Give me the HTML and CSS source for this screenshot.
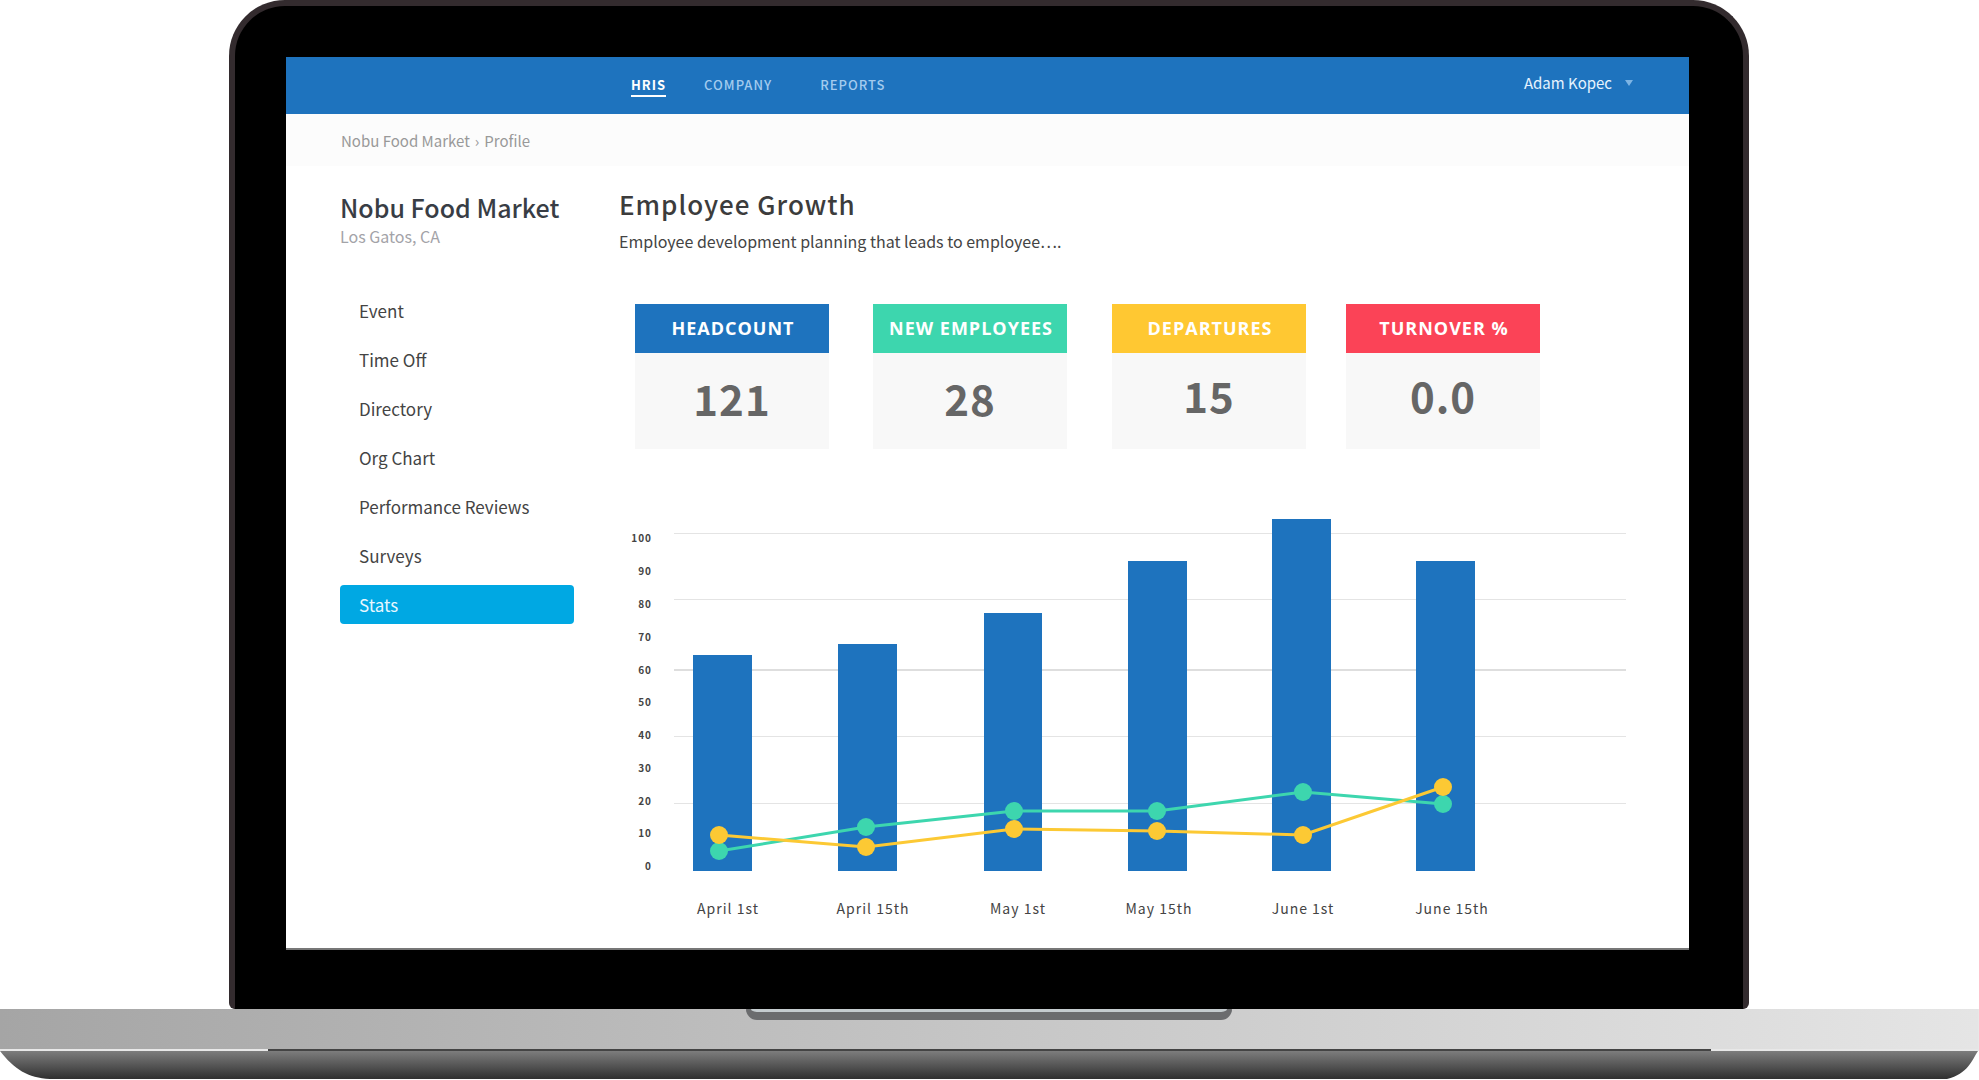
FILE: index.html
```html
<!DOCTYPE html>
<html lang="en">
<head>
  <meta charset="utf-8">
  <meta name="viewport" content="width=device-width, initial-scale=1">
  <title>Nobu Food Market – Employee Growth</title>
  <link rel="stylesheet" href="styles.css">
</head>
<body>
  <div class="laptop">
    <div class="lid">
      <div class="screen">
        <header class="topbar">
          <nav class="topnav" aria-label="Main">
            <a class="topnav-link active" href="#hris">HRIS</a>
            <a class="topnav-link" href="#company">COMPANY</a>
            <a class="topnav-link wide" href="#reports">REPORTS</a>
          </nav>
          <button class="user" type="button">Adam Kopec
            <svg class="caret" viewBox="0 0 8 6" aria-hidden="true"><path d="M0 0h8L4 6z"/></svg>
          </button>
        </header>
        <nav class="crumbs" aria-label="Breadcrumb">
          <a href="#market">Nobu Food Market</a><span>›</span><a href="#profile">Profile</a>
        </nav>
        <div class="content">
          <aside class="sidebar">
            <h2 class="company">Nobu Food Market</h2>
            <p class="place">Los Gatos, CA</p>
            <nav class="menu" aria-label="Profile">
              <a href="#event">Event</a>
              <a href="#time-off">Time Off</a>
              <a href="#directory">Directory</a>
              <a href="#org-chart">Org Chart</a>
              <a href="#reviews">Performance Reviews</a>
              <a href="#surveys">Surveys</a>
              <a class="active" href="#stats">Stats</a>
            </nav>
          </aside>
          <main class="main">
            <h1 class="title">Employee Growth</h1>
            <p class="lead">Employee development planning that leads to employee….</p>
            <section class="cards">
              <article class="card blue"><h3>HEADCOUNT</h3><p>121</p></article>
              <article class="card green"><h3>NEW EMPLOYEES</h3><p>28</p></article>
              <article class="card yellow raised"><h3>DEPARTURES</h3><p>15</p></article>
              <article class="card red raised"><h3>TURNOVER %</h3><p>0.0</p></article>
            </section>
            <svg class="chart" viewBox="0 0 1007 410" role="img" aria-label="Employee growth by period">
              <g class="grid">
                <rect x="55" y="18" width="952" height="1"/>
                <rect x="55" y="84" width="952" height="1"/>
                <rect class="strong" x="55" y="154" width="952" height="2"/>
                <rect x="55" y="221" width="952" height="1"/>
                <rect x="55" y="288" width="952" height="1"/>
              </g>
              <g class="scale">
                <text x="33" y="27">100</text>
                <text x="33" y="60">90</text>
                <text x="33" y="93">80</text>
                <text x="33" y="126">70</text>
                <text x="33" y="159">60</text>
                <text x="33" y="191">50</text>
                <text x="33" y="224">40</text>
                <text x="33" y="257">30</text>
                <text x="33" y="290">20</text>
                <text x="33" y="322">10</text>
                <text x="33" y="355">0</text>
              </g>
              <g class="bars">
                <rect x="74" y="140" width="59" height="216"/>
                <rect x="219" y="129" width="59" height="227"/>
                <rect x="365" y="98" width="58" height="258"/>
                <rect x="509" y="46" width="59" height="310"/>
                <rect x="653" y="4" width="59" height="352"/>
                <rect x="797" y="46" width="59" height="310"/>
              </g>
              <g class="series hires">
                <polyline points="100,336 247,312 395,296 538,296 684,277 824,289"/>
                <circle cx="100" cy="336" r="9"/><circle cx="247" cy="312" r="9"/><circle cx="395" cy="296" r="9"/>
                <circle cx="538" cy="296" r="9"/><circle cx="684" cy="277" r="9"/><circle cx="824" cy="289" r="9"/>
              </g>
              <g class="series leavers">
                <polyline points="100,320 247,332 395,314 538,316 684,320 824,272"/>
                <circle cx="100" cy="320" r="9"/><circle cx="247" cy="332" r="9"/><circle cx="395" cy="314" r="9"/>
                <circle cx="538" cy="316" r="9"/><circle cx="684" cy="320" r="9"/><circle cx="824" cy="272" r="9"/>
              </g>
              <g class="periods">
                <text x="109" y="399">April 1st</text>
                <text x="254" y="399">April 15th</text>
                <text x="399" y="399">May 1st</text>
                <text x="540" y="399">May 15th</text>
                <text x="684" y="399">June 1st</text>
                <text x="833" y="399">June 15th</text>
              </g>
            </svg>
          </main>
        </div>
      </div>
    </div>
    <div class="base">
      <div class="deck"><div class="notch"></div></div>
      <svg class="underside" viewBox="0 0 1979 28" preserveAspectRatio="none" aria-hidden="true">
        <defs>
          <linearGradient id="shade" x1="0" y1="0" x2="0" y2="1">
            <stop offset="0" stop-color="#7d7d7d"/><stop offset="1" stop-color="#303030"/>
          </linearGradient>
        </defs>
        <path fill="url(#shade)" d="M0 0H1978C1972 9 1968 23 1947 28H50C28 27 14 18 0 0z"/>
      </svg>
    </div>
  </div>
</body>
</html>
```
FILE: styles.css
```css
* { box-sizing: border-box; }

body {
  margin: 0;
  background: #fff;
  color: #444;
  font: 16px/24px "Noto Sans CJK SC", "Open Sans", sans-serif;
}

h1, h2, h3, p { margin: 0; }
a { color: inherit; text-decoration: none; }

/* Laptop */
.lid {
  margin: 0 230px 0 229px;
  padding: 51px 54px 59px 51px;
  border: 6px solid #332b2e;
  border-bottom: 0;
  border-radius: 56px 56px 6px 6px;
  background: #000;
}
.screen { background: #fff; border-bottom: 2px solid #777; }

.deck {
  height: 42px;
  background: linear-gradient(90deg, #a5a5a5, #c6c6c6 50%, #e5e5e5);
  border-right: 1px solid #555;
  border-bottom: 2px solid;
  border-image: linear-gradient(90deg, #e8e8e8 270px, #444 270px, #444 calc(100% - 269px), #e8e8e8 calc(100% - 269px)) 2;
}
.notch {
  width: 486px;
  height: 11px;
  margin: 0 auto;
  padding: 0 5px;
  border-radius: 0 0 12px 12px;
  background: linear-gradient(#c5cccf, #c5cccf) content-box, #6b6c6e;
  border-bottom: 8px solid #6b6c6e;
}
.underside { display: block; width: 100%; height: 28px; }

/* Top bar */
.topbar {
  display: flex;
  align-items: center;
  justify-content: space-between;
  height: 57px;
  padding: 0 56px 0 345px;
  background: #1e73be;
  color: #fff;
}
.topnav { display: flex; gap: 38px; padding-top: 1px; }
.topnav-link {
  padding-bottom: 2px;
  border-bottom: 2px solid transparent;
  color: #a3cbee;
  font-size: 13px;
  font-weight: 500;
  line-height: 17px;
  letter-spacing: 1px;
}
.topnav-link.wide { margin-left: 10px; }
.topnav-link.active { border-color: #fff; color: #fff; font-weight: 700; }
.user {
  display: flex;
  align-items: center;
  gap: 13px;
  padding: 0 0 5px;
  border: 0;
  background: none;
  color: #e6f3ff;
  font: inherit;
  font-size: 15px;
}
.caret { width: 8px; height: 6px; fill: #7db4e4; }

.crumbs {
  display: flex;
  align-items: center;
  gap: 5px;
  height: 52px;
  padding: 2px 55px 0;
  background: #fcfcfc;
  color: #999;
  font-size: 15px;
}

/* Page content */
.content {
  display: grid;
  grid-template-columns: 234px minmax(0, 1fr);
  gap: 45px;
  padding: 22px 63px 23px 54px;
}
.company {
  margin-top: 2px;
  color: #383d45;
  font-size: 25px;
  font-weight: 500;
  line-height: 34px;
  white-space: nowrap;
}
.place { color: #a3a3a8; }
.menu { display: flex; flex-direction: column; gap: 10px; margin-top: 43px; }
.menu a {
  padding: 0 19px;
  border-radius: 4px;
  font-size: 17px;
  line-height: 39px;
}
.menu .active { background: #00a8e3; color: #e6f7ff; }

.title {
  color: #3c3c3c;
  font-size: 26px;
  font-weight: 500;
  line-height: 32px;
  letter-spacing: 1px;
}
.lead { margin-top: 9px; }

.cards {
  display: grid;
  grid-template-columns: 238fr 239fr 234fr 195fr;
  max-width: 906px;
  margin: 51px 0 66px 16px;
}
.card { width: 194px; background: #f8f8f8; text-align: center; }
.card h3 {
  padding-left: 2px;
  color: #fff;
  font: 700 18px/49px "Open Sans", sans-serif;
  letter-spacing: 1px;
}
.card p {
  height: 96px;
  color: #666;
  font-size: 42px;
  font-weight: 700;
  line-height: 90px;
  letter-spacing: 1px;
}
.card.raised p { line-height: 84px; }
.blue h3 { background: #1e73be; }
.green h3 { background: #3dd6ae; }
.yellow h3 { background: #ffc832; }
.red h3 { background: #fb4357; }

/* Chart */
.chart { display: block; width: 100%; height: auto; }
.grid { fill: #e4e4e4; }
.grid .strong { fill: #dedede; }
.bars { fill: #1e73be; }
.scale { fill: #444; font-size: 10px; font-weight: 700; letter-spacing: 1px; text-anchor: end; }
.periods { font-size: 14px; letter-spacing: 1px; text-anchor: middle; fill: #444; }
.series polyline { fill: none; stroke-width: 3; }
.hires { fill: #3dd6ae; stroke: #3dd6ae; }
.leavers { fill: #fcc934; stroke: #fcc934; }
.series circle { stroke: none; }
```
